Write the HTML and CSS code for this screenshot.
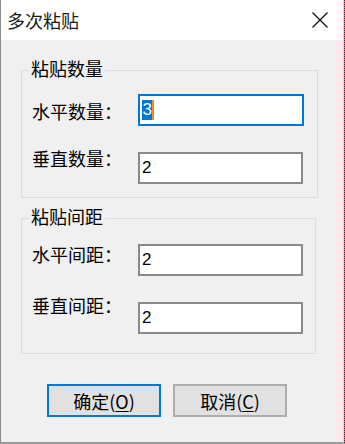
FILE: index.html
```html
<!DOCTYPE html>
<html lang="zh">
<head>
<meta charset="utf-8">
<title>多次粘贴</title>
<link rel="stylesheet" href="styles.css">
</head>
<body>
<div class="screen">
  <div class="window">
    <div class="titlebar">
      <span class="title">多次粘贴</span>
      <svg class="close" width="16" height="16" viewBox="0 0 16 16"><path d="M0.5 0.5 L15.5 15.5 M15.5 0.5 L0.5 15.5" stroke="#111" stroke-width="1.3" fill="none"/></svg>
    </div>
    <div class="content">
      <fieldset class="group g1">
        <legend>粘贴数量</legend>
        <div class="row">
          <span class="label l-a">水平数量：</span>
          <div class="edit focused"><span class="sel">3</span><span class="caret"></span></div>
        </div>
        <div class="row next">
          <span class="label l-b">垂直数量：</span>
          <div class="edit">2</div>
        </div>
      </fieldset>
      <fieldset class="group g2">
        <legend>粘贴间距</legend>
        <div class="row">
          <span class="label l-c">水平间距：</span>
          <div class="edit">2</div>
        </div>
        <div class="row next">
          <span class="label l-d">垂直间距：</span>
          <div class="edit">2</div>
        </div>
      </fieldset>
      <div class="buttons">
        <button class="btn default">确定(<u>O</u>)</button>
        <button class="btn">取消(<u>C</u>)</button>
      </div>
    </div>
  </div>
  <div class="edge"></div>
</div>
</body>
</html>
```

FILE: styles.css
```css
html, body {
  margin: 0;
  padding: 0;
  background: #f0f0f0;
}
.screen {
  display: flex;
  width: 345px;
  height: 444px;
  overflow: hidden;
}
.window {
  width: 342px;
  height: 442px;
  border-left: 1px solid #8c8c8c;
  border-right: 1px solid #dadada;
  border-bottom: 2px solid #9a9a9a;
  background: #f0f0f0;
  font-family: "Noto Sans CJK SC", "Noto Sans", sans-serif;
  font-size: 18px;
  line-height: 20px;
  color: #000;
}
.edge {
  width: 1px;
  height: 444px;
  background: repeating-linear-gradient(#6e2233 0 1px, #a08890 1px 2px);
}
.titlebar {
  height: 40px;
  background: #fff;
  display: flex;
  align-items: center;
  justify-content: space-between;
  padding: 0 15px 0 6px;
}
.title {
  font-size: 18px;
  color: #1a1a1a;
}
.close {
  display: block;
}
.group {
  margin: 18px 0 0 20px;
  padding: 11px 0 13px 7px;
  border: 1px solid #dcdcdc;
  width: 288px;
  min-width: 0;
}
.g2 {
  margin-top: 8px;
  width: 286px;
  padding-top: 13px;
  padding-bottom: 19px;
}
legend {
  padding: 0 2px 5px;
  line-height: 20px;
  margin-left: 0;
}
.row {
  display: flex;
  align-items: flex-start;
}
.row.next {
  margin-top: 26px;
}
.label {
  width: 106px;
  margin-left: 3px;
  white-space: nowrap;
}
.l-a { margin-top: 7px; }
.l-b { margin-top: -4px; }
.l-c { margin-top: 0; }
.l-d { margin-top: -7px; }
.edit {
  box-sizing: border-box;
  width: 165px;
  height: 32px;
  background: #fff;
  border: 2px solid #8a8a8a;
  font-family: "Liberation Sans", Arial, sans-serif;
  font-size: 17px;
  line-height: 20px;
  padding: 4px 0 0 2px;
  display: flex;
  align-items: flex-start;
}
.edit.focused {
  width: 166px;
  border-color: #0078d7;
}
.sel {
  background: #0078d7;
  color: #fff;
  padding: 0 0.5px;
}
.caret {
  width: 1.5px;
  height: 20px;
  background: #f08a24;
}
.buttons {
  display: flex;
  gap: 12px;
  margin: 30px 0 0 46px;
}
.btn {
  box-sizing: border-box;
  width: 114px;
  height: 33px;
  background: #e1e1e1;
  border: 2px solid #adadad;
  font-family: "Noto Sans CJK SC", "Noto Sans", sans-serif;
  font-size: 18px;
  line-height: 20px;
  color: #000;
  padding: 0;
  margin: 0;
}
.btn.default {
  border-color: #0078d7;
}
.btn u {
  text-underline-offset: 2px;
}
```
